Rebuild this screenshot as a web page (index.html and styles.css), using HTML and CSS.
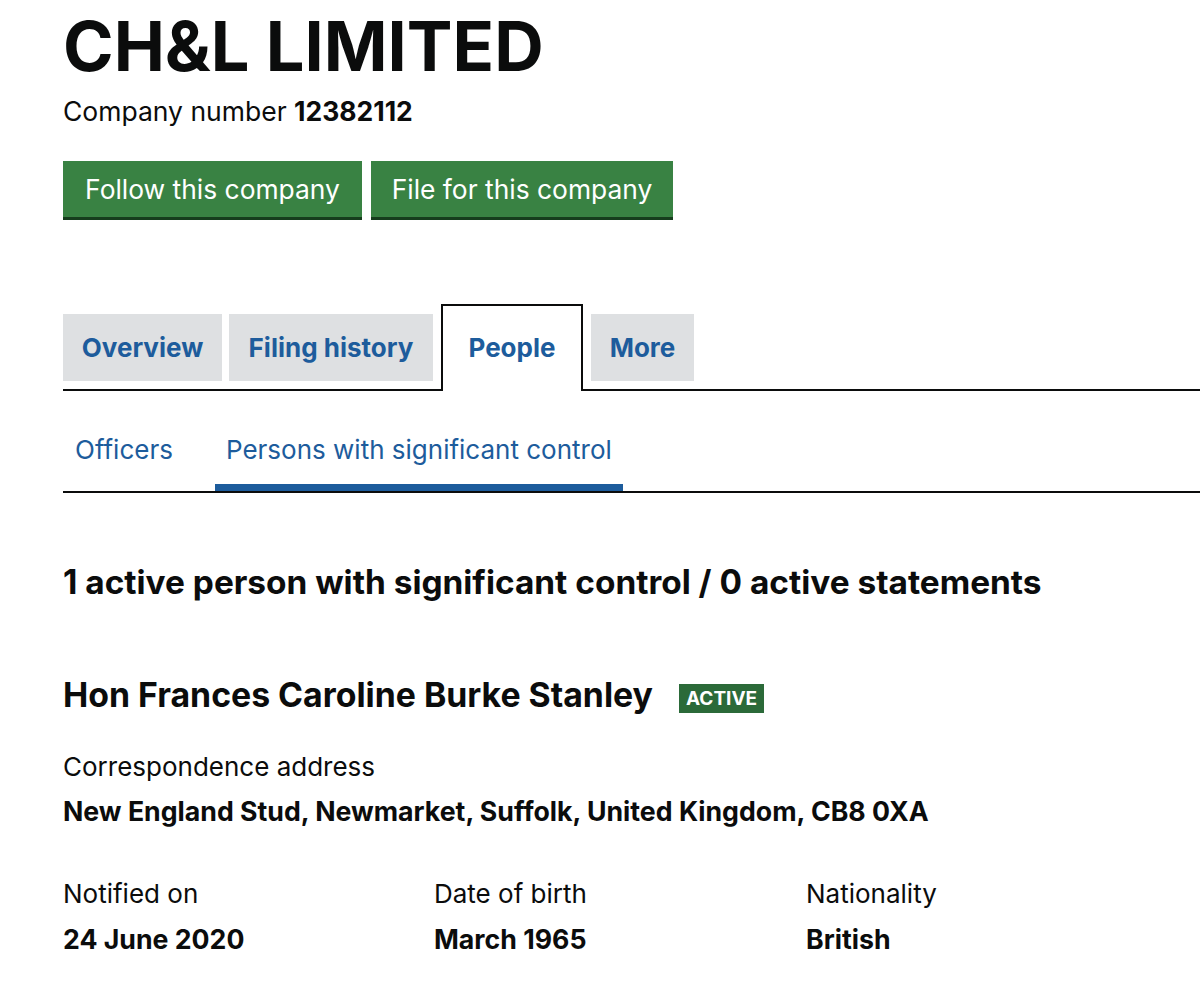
FILE: index.html
```html
<!DOCTYPE html>
<html lang="en">
<head>
<meta charset="utf-8">
<title>CH&amp;L LIMITED - People</title>
<link rel="stylesheet" href="styles.css">
</head>
<body>
<main class="page">
  <h1 class="company-name">CH&amp;L LIMITED</h1>
  <p class="company-number">Company number <strong>12382112</strong></p>
  <div class="actions">
    <a class="button button-follow" href="#">Follow this company</a>
    <a class="button button-file" href="#">File for this company</a>
  </div>

  <nav class="tabs">
    <a class="tab tab-overview" href="#">Overview</a>
    <a class="tab tab-filing" href="#">Filing history</a>
    <a class="tab tab-active" href="#">People</a>
    <a class="tab tab-more" href="#">More</a>
  </nav>

  <nav class="subnav">
    <a class="subtab" href="#">Officers</a>
    <a class="subtab subtab-active" href="#">Persons with significant control</a>
  </nav>

  <h2 class="summary">1 active person with significant control / 0 active statements</h2>

  <section class="person">
    <h3 class="person-name">Hon Frances Caroline Burke Stanley <span class="badge">ACTIVE</span></h3>
    <p class="label">Correspondence address</p>
    <p class="value">New England Stud, Newmarket, Suffolk, United Kingdom, CB8 0XA</p>
    <div class="facts">
      <div class="fact">
        <p class="label">Notified on</p>
        <p class="value">24 June 2020</p>
      </div>
      <div class="fact">
        <p class="label">Date of birth</p>
        <p class="value">March 1965</p>
      </div>
      <div class="fact">
        <p class="label">Nationality</p>
        <p class="value">British</p>
      </div>
    </div>
  </section>
</main>
</body>
</html>
```

FILE: styles.css
```css
html, body {
  margin: 0;
  padding: 0;
  background: #ffffff;
}
body {
  font-family: "Inter", "Liberation Sans", sans-serif;
  color: #0b0c0c;
}
.page {
  padding: 0 0 0 63px;
}
p { margin: 0; }
a { text-decoration: none; }

.company-name {
  margin: 0;
  padding-top: 9px;
  font-size: 68.5px;
  line-height: 76px;
  font-weight: 700;
}
.company-number {
  margin-top: 10px;
  font-size: 26.5px;
  line-height: 32px;
}
.company-number strong { font-weight: 700; }

.actions {
  display: flex;
  gap: 9px;
  margin-top: 34px;
}
.button {
  display: block;
  box-sizing: border-box;
  text-align: center;
  background: #398243;
  color: #ffffff;
  font-size: 26.4px;
  line-height: 57px;
  height: 59px;
  border-bottom: 3px solid #163d1d;
}
.button-follow { width: 299px; }
.button-file { width: 302px; }

.tabs {
  display: flex;
  align-items: flex-end;
  gap: 7px;
  margin-top: 84px;
  border-bottom: 2px solid #0b0c0c;
  height: 85px;
}
.tab {
  display: block;
  box-sizing: border-box;
  text-align: center;
  background: #dee0e2;
  color: #1d5c9c;
  font-size: 26px;
  font-weight: 700;
  line-height: 67px;
  height: 67px;
  margin-bottom: 8px;
}
.tab-overview { width: 159px; }
.tab-filing { width: 204px; }
.tab-more { width: 103px; }
.tab-active {
  width: 142px;
  height: 87px;
  background: #ffffff;
  border: 2px solid #0b0c0c;
  border-bottom: none;
  margin: 0 1px -2px 1px;
  padding-top: 4px;
  line-height: 76px;
}

.subnav {
  display: flex;
  gap: 30px;
  border-bottom: 2px solid #0b0c0c;
  height: 100px;
  align-items: flex-end;
}
.subtab {
  display: block;
  color: #1d5c9c;
  font-size: 26px;
  line-height: 32px;
  padding: 0 12px 25px 12px;
}
.subtab-active {
  border-bottom: 7px solid #1d5c9c;
  padding: 0 11px 18px 11px;
}

.summary {
  margin: 69px 0 0 0;
  font-size: 33.4px;
  line-height: 40px;
  font-weight: 700;
}

.person { margin-top: 73px; }
.person-name {
  margin: 0 0 36px 0;
  font-size: 33.8px;
  line-height: 40px;
  font-weight: 700;
  display: flex;
  align-items: center;
}
.badge {
  display: inline-block;
  margin: 6px 0 0 26px;
  background: #2b6a39;
  color: #ffffff;
  font-size: 19px;
  line-height: 29px;
  height: 29px;
  padding: 0 7px;
  font-weight: 700;
}
.label {
  font-size: 26px;
  line-height: 32px;
}
.value {
  font-size: 26.7px;
  line-height: 32px;
  font-weight: 700;
  margin-top: 12px;
}
.facts {
  display: grid;
  grid-template-columns: 371px 372px 1fr;
  margin-top: 51px;
}
.facts .value { margin-top: 13px; }
```
